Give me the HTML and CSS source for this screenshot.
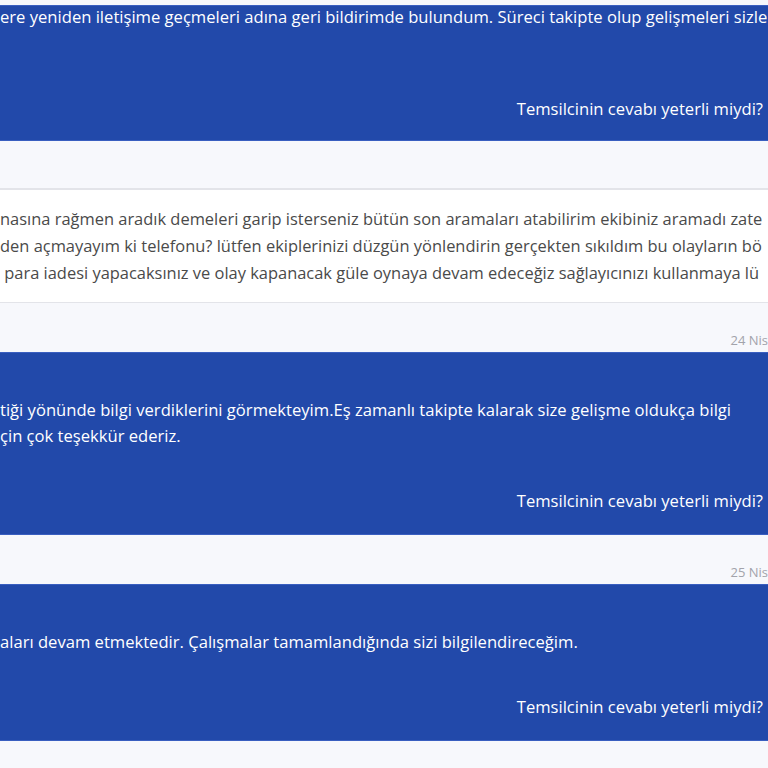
FILE: index.html
```
<!DOCTYPE html>
<html lang="tr">
<head>
    <meta charset="UTF-8">
    <meta name="viewport" content="width=device-width, initial-scale=1.0">
    <title>Talep Detayı</title>
    <link rel="stylesheet" href="styles.css">
</head>
<body>
    <div class="thread">
        <div class="msg agent first">
            <p class="msg-text">ere yeniden iletişime geçmeleri adına geri bildirimde bulundum. Süreci takipte olup gelişmeleri sizle</p>
            <div class="feedback">Temsilcinin cevabı yeterli miydi?</div>
        </div>

        <div class="gap"></div>

        <div class="msg user">
            <p class="msg-text">nasına rağmen aradık demeleri garip isterseniz bütün son aramaları atabilirim ekibiniz aramadı zate<br>den açmayayım ki telefonu? lütfen ekiplerinizi düzgün yönlendirin gerçekten sıkıldım bu olayların bö<br>&nbsp;para iadesi yapacaksınız ve olay kapanacak güle oynaya devam edeceğiz sağlayıcınızı kullanmaya lü</p>
        </div>

        <div class="date-row"><span class="date">24 Nis</span></div>

        <div class="msg agent">
            <p class="msg-text">tiği yönünde bilgi verdiklerini görmekteyim.Eş zamanlı takipte kalarak size gelişme oldukça bilgi<br>çin çok teşekkür ederiz.</p>
            <div class="feedback">Temsilcinin cevabı yeterli miydi?</div>
        </div>

        <div class="date-row"><span class="date">25 Nis</span></div>

        <div class="msg agent">
            <p class="msg-text">aları devam etmektedir. Çalışmalar tamamlandığında sizi bilgilendireceğim.</p>
            <div class="feedback">Temsilcinin cevabı yeterli miydi?</div>
        </div>
    </div>
</body>
</html>
```

FILE: styles.css
```
:root {
    --agent-bg: #2249aa;
    --agent-edge: #3a5fc0;
    --page-bg: #f7f8fc;
    --text-color: #4a4a4a;
    --border-color: #e3e4e9;
    --muted: #a2a3ab;
}

* {
    margin: 0;
    padding: 0;
    box-sizing: border-box;
}

html,
body {
    overflow: hidden;
}

body {
    background-color: var(--page-bg);
    color: var(--text-color);
    font-family: "Open Sans", "Noto Sans", sans-serif;
    font-size: 16.6px;
}

.thread {
    padding-top: 5px;
}

.msg-text {
    white-space: nowrap;
    line-height: 26px;
}

.agent {
    background-color: var(--agent-bg);
    color: #fff;
    border-top: 1px solid var(--agent-edge);
    border-bottom: 1px solid var(--agent-edge);
    padding: 44px 5px 20px 0;
}

.agent .feedback {
    margin-top: 39px;
    text-align: right;
    line-height: 26px;
}

.agent.first {
    padding-top: 0;
    padding-bottom: 18px;
}

.agent.first .msg-text {
    line-height: 22px;
}

.agent.first .feedback {
    margin-top: 68px;
}

.gap {
    height: 47px;
}

.user {
    background: #fff;
    border-top: 2px solid var(--border-color);
    border-bottom: 1px solid var(--border-color);
    padding: 15px 0 16px;
    font-size: 16.45px;
}

.user .msg-text {
    line-height: 27px;
}

.date-row {
    display: flex;
    justify-content: flex-end;
    height: 49px;
    padding-top: 29px;
}

.date {
    font-size: 13px;
    line-height: 16px;
    color: var(--muted);
    white-space: nowrap;
}
```
